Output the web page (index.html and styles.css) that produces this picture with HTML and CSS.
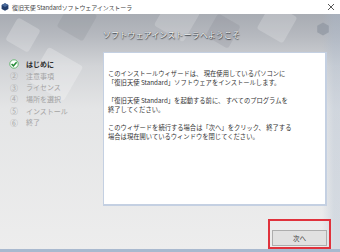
FILE: index.html
```html
<!DOCTYPE html>
<html lang="ja">
<head>
    <meta charset="UTF-8">
    <title>復旧天使 Standardソフトウェアインストーラ</title>
    <link rel="stylesheet" href="styles.css">
</head>
<body>
    <div class="window">
        <!-- Title bar -->
        <header class="titlebar">
            <svg class="app-icon" width="8" height="8" viewBox="0 0 8 8">
                <path d="M4 0.3 L7.4 2.1 L7.4 5.9 L4 7.7 L0.6 5.9 L0.6 2.1 Z" fill="#233d6b"/>
                <path d="M4 0.3 L7.4 2.1 L4 3.9 L0.6 2.1 Z" fill="#4a6a9c"/>
            </svg>
            <span class="title-text">復旧天使 Standardソフトウェアインストーラ</span>
            <svg class="close-btn" width="8" height="8" viewBox="0 0 8 8">
                <path d="M1 1 L7 7 M7 1 L1 7" stroke="#444" stroke-width="0.9" fill="none"/>
            </svg>
        </header>

        <!-- Installer body -->
        <div class="stage">
            <div class="art">
                <div class="cube c1"></div>
                <div class="cube c2"></div>
                <div class="cube c3"></div>
                <div class="cube c4"></div>
                <div class="cube c5"></div>
                <div class="cube c6"></div>
                <svg class="badge" width="14" height="14" viewBox="0 0 14 14">
                    <path d="M7 0.5 L12.8 3.8 L12.8 10.2 L7 13.5 L1.2 10.2 L1.2 3.8 Z" fill="#8e96a1" opacity="0.7"/>
                </svg>
            </div>

            <nav class="steps">
                <div class="step current">
                    <svg class="step-icon" width="10" height="10" viewBox="0 0 10 10">
                        <circle cx="5" cy="5" r="4.2" fill="#fff" stroke="#5bb266" stroke-width="0.9"/>
                        <path d="M2.6 5 L4.4 6.8 L7.6 3.2" stroke="#238a35" stroke-width="1.5" fill="none"/>
                    </svg>
                    <span>はじめに</span>
                </div>
                <div class="step"><span class="step-num">②</span><span>注意事項</span></div>
                <div class="step"><span class="step-num">③</span><span>ライセンス</span></div>
                <div class="step"><span class="step-num">④</span><span>場所を選択</span></div>
                <div class="step"><span class="step-num">⑤</span><span>インストール</span></div>
                <div class="step"><span class="step-num">⑥</span><span>終了</span></div>
            </nav>

            <main class="content">
                <h1 class="heading">ソフトウェアインストーラへようこそ</h1>
                <div class="panel">
                    <p>このインストールウィザードは、 現在使用しているパソコンに<br>「復旧天使 Standard」ソフトウェアをインストールします。</p>
                    <p>「復旧天使 Standard」を起動する前に、 すべてのプログラムを<br>終了してください。</p>
                    <p>このウィザードを続行する場合は「次へ」をクリック、 終了する<br>場合は現在開いているウィンドウを閉じてください。</p>
                </div>
                <div class="actions">
                    <div class="highlight">
                        <button class="next-btn">次へ</button>
                    </div>
                </div>
            </main>
        </div>
    </div>
</body>
</html>
```

FILE: styles.css
```css
* {
    margin: 0;
    padding: 0;
    box-sizing: border-box;
}

body {
    width: 340px;
    height: 252px;
    overflow: hidden;
    font-family: "Noto Sans CJK JP", "Noto Sans", sans-serif;
    background: #ffffff;
}

.window {
    height: 252px;
    display: flex;
    flex-direction: column;
    border-bottom: 3px solid #a9b9cf;
}

/* Title bar */
.titlebar {
    height: 14px;
    background: #ffffff;
    display: flex;
    align-items: center;
    padding: 0 5px 0 1px;
    gap: 3px;
}

.app-icon {
    flex: none;
}

.title-text {
    font-size: 6px;
    color: #444;
    flex: 1;
    letter-spacing: -0.1px;
}

.close-btn {
    flex: none;
}

/* Main stage */
.stage {
    flex: 1;
    position: relative;
    display: flex;
    overflow: hidden;
    background:
        linear-gradient(90deg, rgba(255,255,255,0) 0, rgba(255,255,255,0) 322px, rgba(170,185,205,0.35) 334px),
        linear-gradient(180deg, #a8acb3 0, #b6b9bf 22px, #d2d4d7 52px, #e4e5e6 95px, #ededed 100%);
}

/* background decoration */
.art {
    position: absolute;
    inset: 0;
    pointer-events: none;
}

.cube {
    position: absolute;
    width: 26px;
    height: 26px;
    border-radius: 3px;
    transform: rotate(30deg);
}

.c1 { left: 10px; top: 8px; background: rgba(255,255,255,0.22); }
.c2 { left: 62px; top: -8px; background: rgba(120,125,135,0.18); width: 30px; height: 30px; }
.c3 { left: 160px; top: -12px; background: rgba(255,255,255,0.18); width: 34px; height: 34px; }
.c4 { left: 210px; top: 4px; background: rgba(110,115,125,0.16); }
.c5 { left: 262px; top: -6px; background: rgba(255,255,255,0.2); width: 30px; height: 30px; }
.c6 { left: 36px; top: 40px; background: rgba(255,255,255,0.25); width: 40px; height: 40px; }

.badge {
    position: absolute;
    left: 316px;
    top: 8px;
}

/* Step list */
.steps {
    position: relative;
    width: 103px;
    flex: none;
    padding: 44px 0 0 9px;
    display: flex;
    flex-direction: column;
}

.step {
    height: 11.7px;
    display: flex;
    align-items: center;
    gap: 7px;
    font-size: 7px;
    color: #a4a4a4;
}

.step.current {
    color: #2a2a2a;
    font-weight: bold;
}

.step-icon {
    flex: none;
}

.step-num {
    width: 10px;
    text-align: center;
    font-size: 8px;
    font-weight: normal;
    color: #a8a8a8;
}

/* Content column */
.content {
    position: relative;
    flex: 1;
    display: flex;
    flex-direction: column;
    padding-right: 13px;
}

.heading {
    font-size: 8px;
    font-weight: normal;
    color: #f6f6f6;
    text-shadow: 0.5px 0.5px 1px rgba(40, 44, 50, 0.9), 0 0 1px rgba(60, 64, 70, 0.8);
    height: 38px;
    padding-top: 15px;
    letter-spacing: 0.1px;
}

.panel {
    height: 156px;
    background: #ffffff;
    border: 1px solid #c4d0e2;
    border-width: 1px 2px 2px 1px;
    padding: 16px 4px 0 4px;
    font-size: 6.3px;
    line-height: 9px;
    color: #333;
}

.panel p {
    margin-bottom: 9px;
}

.actions {
    display: flex;
    justify-content: flex-end;
    padding-top: 13px;
    margin-right: -4px;
}

.highlight {
    border: 2px solid #e0323c;
    padding: 1px 2px;
}

.next-btn {
    width: 55px;
    height: 16px;
    background: #e1e1e1;
    border: 1px solid #adadad;
    font-family: "Noto Sans CJK JP", sans-serif;
    font-size: 6.5px;
    color: #333;
}
```
